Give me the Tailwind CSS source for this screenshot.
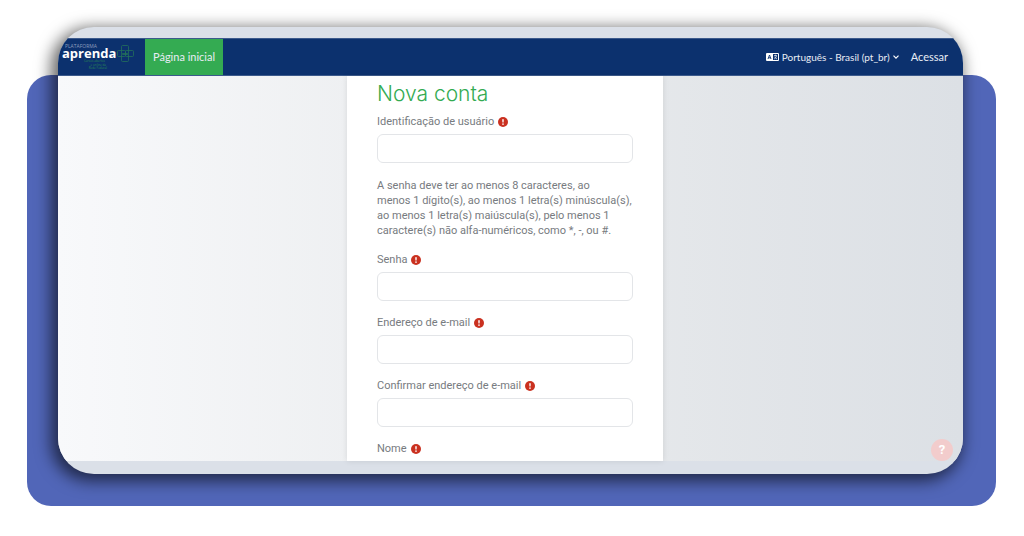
<!DOCTYPE html>
<html lang="pt-BR">
<head>
<meta charset="utf-8">
<meta name="viewport" content="width=device-width, initial-scale=1">
<title>Nova conta</title>
<script src="https://cdn.jsdelivr.net/npm/@tailwindcss/browser@4"></script>
</head>
<body class="bg-white px-7 pt-[75px] font-['Century_Gothic','Roboto',sans-serif] text-[11px] text-[#777b80]">
<svg class="hidden" aria-hidden="true">
  <symbol id="required" viewBox="0 0 16 16">
    <circle cx="8" cy="8" r="8" fill="#ca3120"/>
    <path d="M6.700 3.400h2.600l-.4 5.200H7.100z" fill="#fff"/>
    <circle cx="8" cy="11.400" r="1.300" fill="#fff"/>
  </symbol>
</svg>
<div class="-ml-px flex rounded-3xl bg-[#5166b8]">
  <div class="-mt-12 mr-[33px] mb-8 ml-[31px] flex-1 overflow-hidden rounded-[36px] bg-[#dbe0e8] pt-[11px] pb-[13px] shadow-[-4px_4px_16px_3px_rgba(0,0,0,0.6)]">
    <header class="flex h-[38px] items-stretch border-y border-[#3c5a8c] bg-[#0c316e] font-['Century_Gothic','Lato',sans-serif] text-[#e8edf5]">
      <a href="#" class="flex w-[87px] items-start pl-1" aria-label="Plataforma aprenda">
        <svg class="mt-1 h-8 w-[76px]" viewBox="0 0 76 32" font-family="Open Sans, sans-serif">
          <text x="3" y="5" font-size="5" fill="#8d9dbd">PLATAFORMA</text>
          <text x="0" y="15" font-size="13" font-weight="700" fill="#fff">aprenda</text>
          <g font-size="3" fill="#2a8a55" text-anchor="end">
            <text x="43" y="19">Cursos abertos</text>
            <text x="44" y="23">e online da</text>
            <text x="45" y="26">Rede Federal</text>
          </g>
          <g fill="none" stroke="#23705a" stroke-width=".8">
            <rect x="59.500" y="2.500" width="7" height="9" rx="1"/>
            <rect x="55.500" y="7.500" width="8" height="6" rx="1"/>
            <rect x="63.500" y="7.500" width="8" height="6" rx="1"/>
            <rect x="59.500" y="10.500" width="7" height="8" rx="1"/>
          </g>
        </svg>
      </a>
      <a href="#" class="flex items-center bg-[#34ab52] px-2">Página inicial</a>
      <div class="ml-auto flex items-center gap-3 pr-[15px]">
        <button type="button" class="flex items-center gap-[3px]">
          <svg class="h-2 w-[13px]" viewBox="0 0 13 8">
            <rect width="13" height="8" rx="1" fill="#fff"/>
            <path d="M7 1h5v6H7z" fill="#0c316e"/>
            <path d="M2 6 3.500 2 5 6M2.500 4.800h2" fill="none" stroke="#0c316e" stroke-width=".9"/>
            <path d="M8 2.600h3M9.500 1.700v.9M8.200 6q2-1 2.300-3.200M8.600 3.800Q9.500 5.400 11 6" fill="none" stroke="#fff" stroke-width=".7"/>
          </svg>
          <span class="text-[10px]">Português - Brasil (pt_br)</span>
          <svg class="h-[6px] w-[6px]" viewBox="0 0 6 6"><path d="M.5 1.700 3 4.200 5.500 1.700" fill="none" stroke="#fff" stroke-width="1.200"/></svg>
        </button>
        <a href="#">Acessar</a>
      </div>
    </header>
    <main class="relative flex justify-center bg-linear-to-r from-[#f8f9fb] from-0% via-[#e9ebed] via-50% to-[#dce0e5] to-100% pr-[11px]">
      <form class="w-[316px] bg-white px-[30px] pt-1 pb-[3px] shadow-[0_0_6px_rgba(0,0,0,0.1)]">
        <h1 class="mb-[5px] font-['Century_Gothic','Inter',sans-serif] text-[21px] leading-7 font-light text-[#34ab52]">Nova conta</h1>
        <label for="user" class="mb-[3px] flex items-center gap-1 leading-[18px]">Identificação de usuário <svg class="size-[10px]"><use href="#required"/></svg></label>
        <input id="user" type="text" class="block h-[29px] w-full rounded-md border border-[#e3e5e8] px-2">
        <p class="mt-[15px] mb-[13px] leading-[15px]">A senha deve ter ao menos 8 caracteres, ao<br>menos 1 dígito(s), ao menos 1 letra(s) minúscula(s),<br>ao menos 1 letra(s) maiúscula(s), pelo menos 1<br>caractere(s) não alfa-numéricos, como *, -, ou #.</p>
        <label for="pass" class="mb-[3px] flex items-center gap-1 leading-[18px]">Senha <svg class="size-[10px]"><use href="#required"/></svg></label>
        <input id="pass" type="password" class="mb-[13px] block h-[29px] w-full rounded-md border border-[#e3e5e8] px-2">
        <label for="mail" class="mb-[3px] flex items-center gap-1 leading-[18px]">Endereço de e-mail <svg class="size-[10px]"><use href="#required"/></svg></label>
        <input id="mail" type="email" class="mb-[13px] block h-[29px] w-full rounded-md border border-[#e3e5e8] px-2">
        <label for="mail2" class="mb-[3px] flex items-center gap-1 leading-[18px]">Confirmar endereço de e-mail <svg class="size-[10px]"><use href="#required"/></svg></label>
        <input id="mail2" type="email" class="mb-[13px] block h-[29px] w-full rounded-md border border-[#e3e5e8] px-2">
        <div class="flex items-center gap-1 leading-[18px]">Nome <svg class="size-[10px]"><use href="#required"/></svg></div>
      </form>
      <button type="button" aria-label="Ajuda" class="absolute right-[10px] bottom-0 size-[22px] rounded-full bg-[#f2cccc] text-[13px] font-bold text-white">?</button>
    </main>
  </div>
</div>
</body>
</html>
